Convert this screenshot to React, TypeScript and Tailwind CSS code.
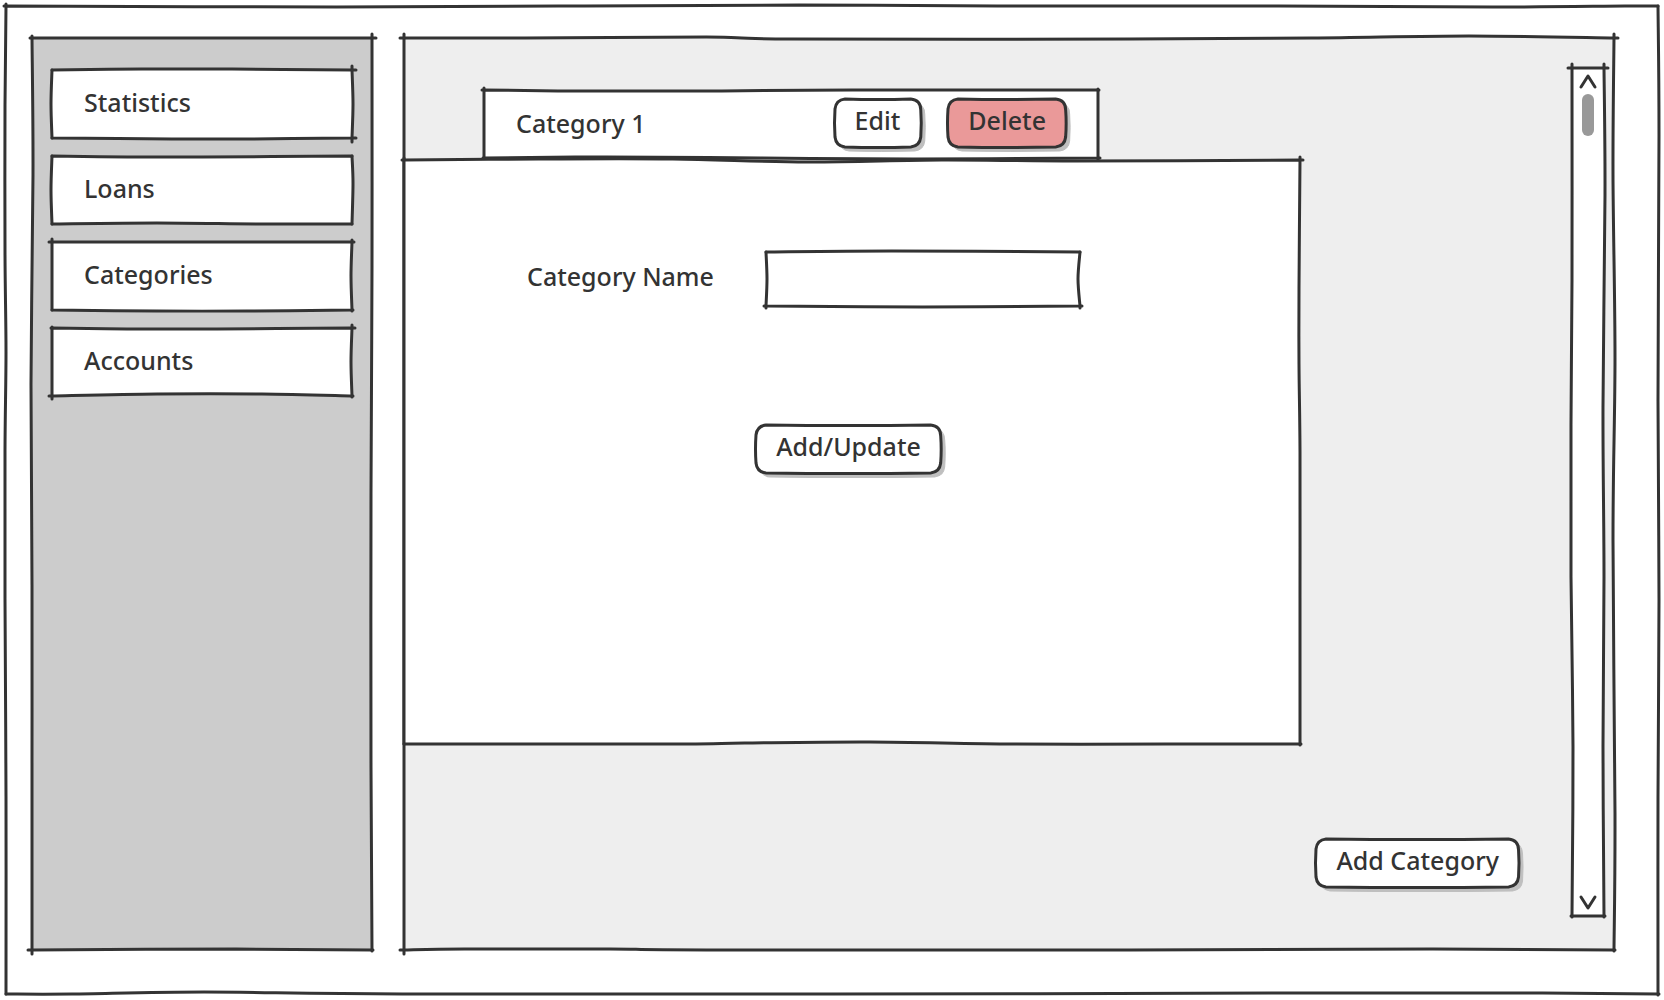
import React from "react";

type Point = [number, number];

// Each edge lists [position along the edge 0..1, deviation in px].
type Wobble = Point[];

interface SketchProps {
  w: number;
  h: number;
  fill: string;
  top?: Wobble;
  right?: Wobble;
  bottom?: Wobble;
  left?: Wobble;
  // How far the strokes run past each corner: tl, tr, br, bl.
  ticks?: [number, number, number, number];
}

function curve(points: Point[]): string {
  let d = "";
  for (let i = 0; i < points.length - 1; i++) {
    const a = points[Math.max(i - 1, 0)];
    const b = points[i];
    const c = points[i + 1];
    const e = points[Math.min(i + 2, points.length - 1)];
    d += ` C${b[0] + (c[0] - a[0]) / 6} ${b[1] + (c[1] - a[1]) / 6} ${c[0] - (e[0] - b[0]) / 6} ${c[1] - (e[1] - b[1]) / 6} ${c[0]} ${c[1]}`;
  }
  return d;
}

/** Hand-drawn rectangle that fills its parent. */
function Sketch({ w, h, fill, top = [], right = [], bottom = [], left = [], ticks = [1, 1, 1, 1] }: SketchProps) {
  const t: Point[] = [[0, 0], ...top.map(([p, o]): Point => [p * w, o]), [w, 0]];
  const r: Point[] = [[w, 0], ...right.map(([p, o]): Point => [w + o, p * h]), [w, h]];
  const b: Point[] = [[0, h], ...bottom.map(([p, o]): Point => [p * w, h + o]), [w, h]];
  const l: Point[] = [[0, 0], ...left.map(([p, o]): Point => [o, p * h]), [0, h]];
  const outline = `M0 0${curve(t)}${curve(r)}${curve([...b].reverse())}${curve([...l].reverse())}Z`;
  const [tl, tr, br, bl] = ticks;
  const marks =
    `M${-tl} 0H0V${-tl} M${w + tr} 0H${w}V${-tr} ` + `M${w + br} ${h}H${w}V${h + br} M${-bl} ${h}H0V${h + bl}`;
  return (
    <svg
      aria-hidden="true"
      viewBox={`0 0 ${w} ${h}`}
      preserveAspectRatio="none"
      className="pointer-events-none absolute inset-0 -z-10 h-full w-full overflow-visible"
      stroke="#333"
      strokeWidth="3"
      strokeLinecap="round"
      strokeLinejoin="round"
    >
      <path d={outline} fill={fill} vectorEffect="non-scaling-stroke" />
      <path d={marks} fill="none" vectorEffect="non-scaling-stroke" />
    </svg>
  );
}

function SketchButton({ children, w, fill = "#fff" }: { children: string; w: number; fill?: string }) {
  const d = `M10 0 Q${w / 2} 1 ${w - 10} 0 Q${w} 1 ${w} 11 Q${w + 1} 24 ${w} 38 Q${w - 1} 47 ${w - 10} 48 Q${w / 2} 49 10 48 Q1 47 0 38 Q-1 24 0 10 Q1 1 10 0Z`;
  return (
    <button type="button" className="relative isolate h-12 cursor-pointer px-5 pb-1.5 whitespace-nowrap">
      <svg
        aria-hidden="true"
        viewBox={`0 0 ${w} 48`}
        preserveAspectRatio="none"
        className="pointer-events-none absolute inset-0 -z-10 h-full w-full overflow-visible"
      >
        <path d={d} transform="translate(4 4)" fill="#bfbfbf" stroke="#bfbfbf" strokeWidth="1" />
        <path d={d} fill={fill} stroke="#333" strokeWidth="3" strokeLinejoin="round" vectorEffect="non-scaling-stroke" />
      </svg>
      {children}
    </button>
  );
}

const menu: { label: string; shape: Omit<SketchProps, "w" | "h" | "fill"> }[] = [
  {
    label: "Statistics",
    shape: { top: [[0.3, -1], [0.6, -1]], bottom: [[0.4, 1], [0.65, 1]], left: [[0.5, -1]], right: [[0.5, 1]], ticks: [0, 4, 4, 0] },
  },
  {
    label: "Loans",
    shape: { top: [[0.25, 1], [0.5, 1]], bottom: [[0.35, -1], [0.7, 0]], left: [[0.5, -1]], right: [[0.4, 1]], ticks: [0, 0, 0, 0] },
  },
  {
    label: "Categories",
    shape: { bottom: [[0.35, 1], [0.65, 1]], right: [[0.5, -1]], ticks: [3, 2, 1, 0] },
  },
  {
    label: "Accounts",
    shape: { top: [[0.25, 1], [0.55, 1]], bottom: [[0.35, -2], [0.7, -2]], right: [[0.5, -1]], ticks: [1, 3, 1, 3] },
  },
];

function Chevron({ d }: { d: string }) {
  return (
    <svg viewBox="0 0 14 12" className="h-3 w-3.5 overflow-visible" fill="none" stroke="#333" strokeWidth="3" strokeLinecap="round" strokeLinejoin="round">
      <path d={d} />
    </svg>
  );
}

function ScrollBar() {
  return (
    <div className="relative isolate mt-[30px] mr-2.5 mb-[34px] flex w-8 shrink-0 flex-col items-center pt-[7px] pb-[7px]">
      <Sketch
        w={32}
        h={848}
        fill="#fff"
        left={[[0.25, 0], [0.42, -1], [0.6, -1], [0.8, 1]]}
        right={[[0.15, 1], [0.4, -1], [0.6, 0], [0.8, -1]]}
        ticks={[4, 4, 1, 1]}
      />
      <button type="button" aria-label="Scroll up" className="cursor-pointer">
        <Chevron d="M0 12L7 1L14 12" />
      </button>
      <div className="mt-[7px] h-[42px] w-3 rounded-full bg-[#999]" />
      <button type="button" aria-label="Scroll down" className="mt-auto cursor-pointer">
        <Chevron d="M0 0L7 11L14 0" />
      </button>
    </div>
  );
}

export default function App() {
  return (
    <div className="flex min-h-screen bg-white p-1.5 font-['Noto_Sans',sans-serif] text-[25px] leading-8 font-medium text-[#333]">
      <div className="relative isolate flex flex-1 gap-8 pt-8 pr-11 pb-11 pl-[26px]">
        <Sketch
          w={1652}
          h={988}
          fill="#fff"
          top={[[0.2, 1], [0.35, 0], [0.48, -1], [0.6, 0], [0.77, 0], [0.9, 1], [0.98, 0]]}
          left={[[0.1, -1], [0.25, -1], [0.35, 0], [0.45, -1], [0.6, -1], [0.8, 0]]}
          right={[[0.13, 1], [0.4, 0], [0.6, 1], [0.8, 0]]}
          bottom={[[0.04, 0], [0.12, -2], [0.24, 0], [0.5, 0], [0.8, -1], [0.93, -1]]}
          ticks={[2, 0, 1, 0]}
        />

        <nav className="relative isolate flex w-[340px] shrink-0 flex-col gap-[18px] px-5 pt-8">
          <Sketch
            w={340}
            h={912}
            fill="#ccc"
            left={[[0.15, 1], [0.38, -1], [0.6, 0], [0.8, 0]]}
            right={[[0.25, 0], [0.5, -1], [0.8, -1]]}
            bottom={[[0.6, -1]]}
            ticks={[2, 4, 1, 4]}
          />
          {menu.map(({ label, shape }) => (
            <a key={label} href="#" className="relative isolate flex h-[68px] items-center pb-1 pl-8">
              <Sketch w={300} h={68} fill="#fff" {...shape} />
              {label}
            </a>
          ))}
        </nav>

        <main className="relative isolate flex min-w-0 flex-1">
          <Sketch
            w={1210}
            h={912}
            fill="#eee"
            top={[[0.1, 0], [0.25, -1], [0.32, 1], [0.6, 1], [0.75, 0], [0.88, -2]]}
            right={[[0.15, -1], [0.35, 1], [0.55, -1], [0.85, 1]]}
            bottom={[[0.05, -1], [0.17, -1], [0.25, 0], [0.6, 0], [0.85, -1]]}
            ticks={[4, 4, 1, 4]}
          />
          <div className="flex min-w-0 flex-1 flex-col pt-[52px]">
            <header className="relative isolate mb-0.5 ml-20 flex h-[68px] w-[614px] items-center gap-7 pr-8 pb-0.5 pl-8">
              <Sketch
                w={614}
                h={68}
                fill="#fff"
                top={[[0.15, 1], [0.35, 1], [0.6, 0]]}
                bottom={[[0.2, -1], [0.45, 0], [0.7, 1]]}
                ticks={[2, 1, 2, 1]}
              />
              <h1 className="mr-auto">Category 1</h1>
              <SketchButton w={86}>Edit</SketchButton>
              <SketchButton w={118} fill="#ea9999">
                Delete
              </SketchButton>
            </header>

            <form
              className="relative isolate flex w-[896px] max-w-full flex-1 flex-col items-center pt-[92px] pr-[130px] pl-[123px]"
              onSubmit={(e) => e.preventDefault()}
            >
              <Sketch
                w={896}
                h={584}
                fill="#fff"
                top={[[0.15, -1], [0.3, -1], [0.45, 2], [0.6, 0], [0.75, 1]]}
                right={[[0.22, -1], [0.35, -1], [0.5, 0], [0.75, 0]]}
                bottom={[[0.3, 0], [0.38, -1], [0.52, -2], [0.68, 0], [0.85, 0]]}
                ticks={[2, 3, 1, 0]}
              />
              <div className="flex items-center self-start">
                <label htmlFor="category-name" className="w-[239px] pb-1.5 whitespace-nowrap">
                  Category Name
                </label>
                <div className="relative isolate">
                  <Sketch
                    w={314}
                    h={54}
                    fill="#fff"
                    top={[[0.4, -1]]}
                    bottom={[[0.5, 1]]}
                    left={[[0.5, 1]]}
                    right={[[0.5, -2]]}
                    ticks={[0, 0, 2, 2]}
                  />
                  <input id="category-name" type="text" className="block h-[54px] w-[314px] bg-transparent px-3 outline-none" />
                </div>
              </div>
              <div className="mt-[119px]">
                <SketchButton w={184}>Add/Update</SketchButton>
              </div>
            </form>

            <div className="flex justify-end pt-[95px] pr-[53px] pb-[63px]">
              <SketchButton w={202}>Add Category</SketchButton>
            </div>
          </div>
          <ScrollBar />
        </main>
      </div>
    </div>
  );
}
